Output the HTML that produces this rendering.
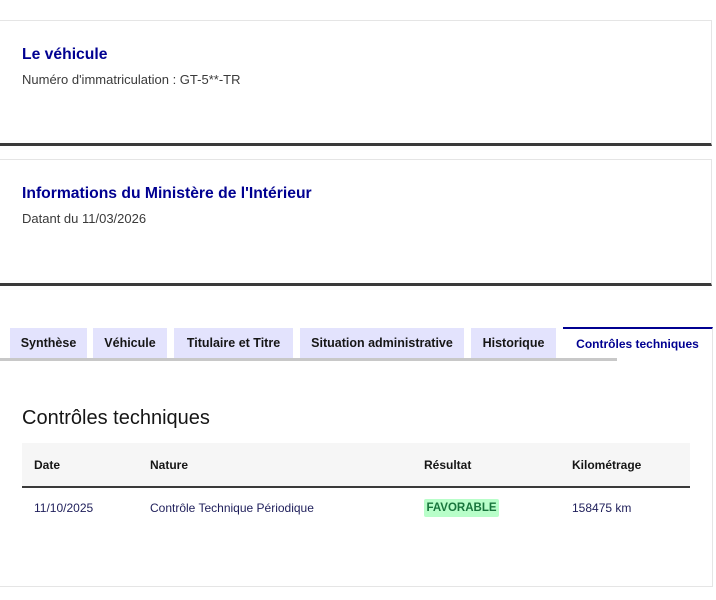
<!DOCTYPE html>
<html><head><meta charset="utf-8"><style>
body{margin:0;width:716px;height:600px;background:#fff;font-family:"Liberation Sans",sans-serif;position:relative;overflow:hidden}
.a{position:absolute;white-space:nowrap}
.card{position:absolute;left:-2px;width:714px;border-top:1px solid #e5e5e5;border-right:1px solid #e5e5e5;box-sizing:border-box}
.h{color:#000091;font-weight:bold;font-size:15.7px}
.p{color:#3a3a3a;font-size:13px}
.tab{position:absolute;top:328px;height:30px;background:#e3e3fd;color:#161616;font-size:12.5px;font-weight:bold;line-height:30px;text-align:center}
.th{font-size:12px;font-weight:bold;color:#161616;top:458px}
.td{font-size:12px;color:#1e1e5a;top:501px}
</style></head><body>
<div class="card" style="top:20px;height:126px;border-bottom:3px solid #3a3a3a"></div>
<div class="a h" style="left:22px;top:46px">Le véhicule</div>
<div class="a p" style="left:22px;top:72px">Numéro d'immatriculation : GT-5**-TR</div>
<div class="card" style="top:159px;height:127px;border-bottom:3px solid #3a3a3a"></div>
<div class="a h" style="left:22px;top:185px">Informations du Ministère de l'Intérieur</div>
<div class="a p" style="left:22px;top:211px">Datant du 11/03/2026</div>

<div class="tab" style="left:10px;width:77px">Synthèse</div>
<div class="tab" style="left:93px;width:74px">Véhicule</div>
<div class="tab" style="left:174px;width:119px">Titulaire et Titre</div>
<div class="tab" style="left:300px;width:164px">Situation administrative</div>
<div class="tab" style="left:471px;width:85px">Historique</div>
<div class="tab" style="left:563px;width:149px;background:#fff;color:#000091;border-top:2px solid #000091;border-right:1px solid #e5e5e5;top:327px;height:33px;line-height:30px;font-size:12px">Contrôles techniques</div>
<div class="a" style="left:0;top:358px;width:617px;height:3px;background:#c8c8c8"></div>

<div class="a" style="left:-2px;top:360px;width:715px;height:227px;border-right:1px solid #e5e5e5;border-bottom:1px solid #e5e5e5;box-sizing:border-box"></div>
<div class="a" style="left:22px;top:407px;font-size:20px;color:#161616">Contrôles techniques</div>
<div class="a" style="left:22px;top:443px;width:668px;height:43px;background:#f6f6f6;border-bottom:2px solid #3a3a3a"></div>
<div class="a th" style="left:34px">Date</div>
<div class="a th" style="left:150px">Nature</div>
<div class="a th" style="left:424px">Résultat</div>
<div class="a th" style="left:572px">Kilométrage</div>
<div class="a td" style="left:34px">11/10/2025</div>
<div class="a td" style="left:150px">Contrôle Technique Périodique</div>
<div class="a" style="left:424px;top:499px;width:75px;height:18px;background:#b8fec9;color:#18753c;font-size:11.5px;font-weight:bold;line-height:18px;text-align:center;border-radius:2px">FAVORABLE</div>
<div class="a td" style="left:572px">158475 km</div>
</body></html>
